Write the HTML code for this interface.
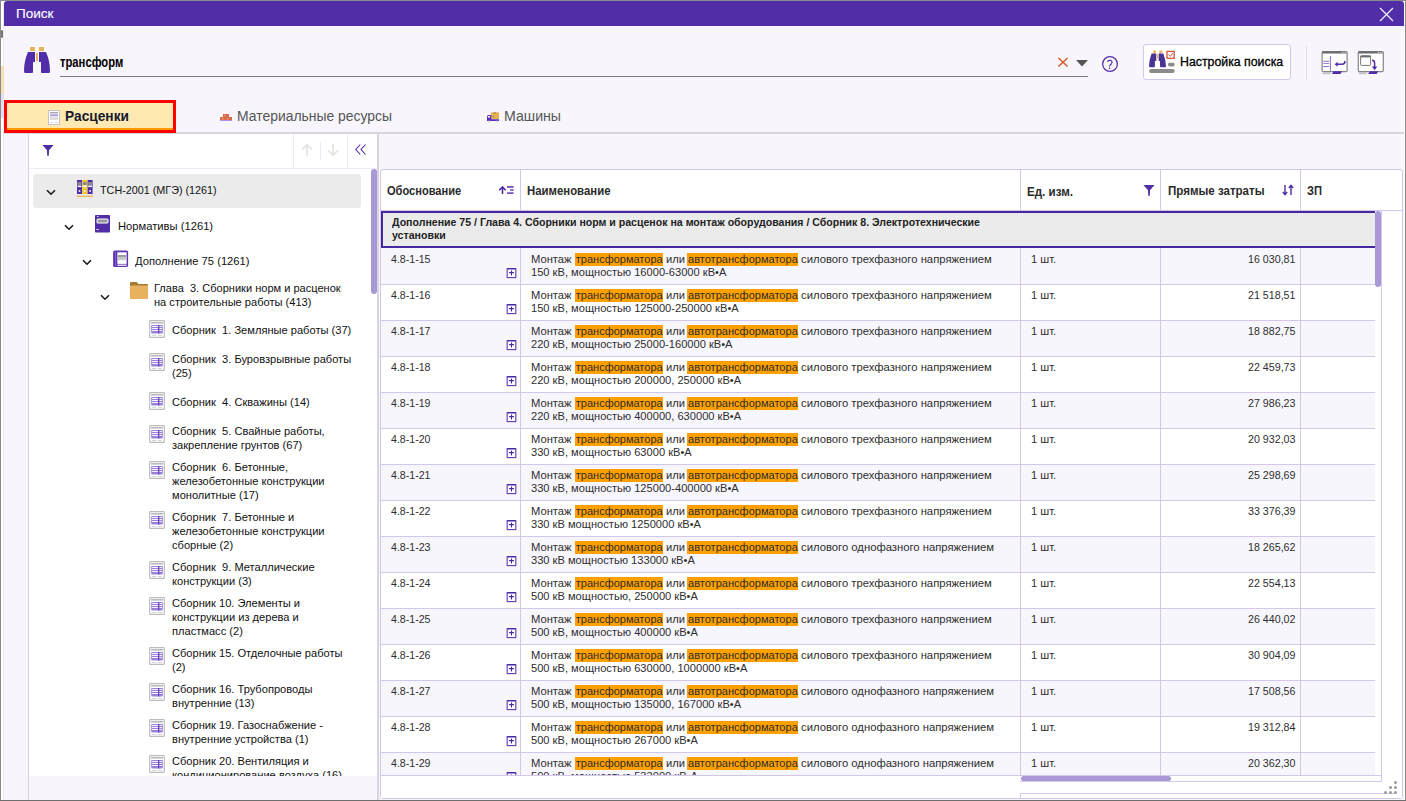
<!DOCTYPE html><html><head><meta charset="utf-8"><style>
html,body{margin:0;padding:0;width:1406px;height:801px;overflow:hidden;background:#fff;}
body{position:relative;font-family:"Liberation Sans", sans-serif;}
div,svg,span.t{position:absolute;}
span.t{white-space:pre;transform-origin:0 0;}
</style></head><body>
<div style="left:0px;top:0px;width:1406px;height:801px;background:#ffffff;"></div>
<div style="left:0px;top:0px;width:1406px;height:1px;background:#8a8a8a;"></div>
<div style="left:0px;top:0px;width:1px;height:801px;background:#8a8a8a;"></div>
<div style="left:1405px;top:0px;width:1px;height:801px;background:#8a8a8a;"></div>
<div style="left:0px;top:800px;width:1406px;height:1px;background:#6e6e6e;"></div>
<div style="left:3px;top:1px;width:1px;height:799px;background:#EBEBEB;"></div>
<div style="left:1px;top:30px;width:2px;height:8px;background:#777;border-radius:1px;"></div>
<div style="left:1px;top:66px;width:3px;height:28px;background:#F3E2B5;"></div>
<div style="left:1px;top:94px;width:3px;height:24px;background:#E3E0F5;"></div>
<div style="left:4px;top:1px;width:1400px;height:799px;background:#F8F5FD;border-radius:3px 3px 0 0;"></div>
<div style="left:4px;top:1px;width:1400px;height:25px;background:#512DA8;border-radius:3px 3px 0 0;"></div>
<span class="t" style="left:16.30px;top:5.50px;font-size:13px;line-height:16px;color:#ffffff;-webkit-text-stroke:0.12px #ffffff;transform:scaleX(1.0380);">Поиск</span>
<svg style="left:1379px;top:7px" width="15" height="15" viewBox="0 0 15 15"><path d="M1 1 L14 14 M14 1 L1 14" stroke="#f4f2fa" stroke-width="1.2" fill="none"/></svg>
<svg style="left:24px;top:47px" width="27" height="27" viewBox="0 0 27 27">
<rect x="6" y="0" width="5" height="4" fill="#E8B45A"/>
<rect x="15" y="0" width="5" height="4" fill="#E8B45A"/>
<rect x="12" y="6" width="2" height="8" fill="#E8B45A"/>
<path d="M4 5 H11 V15 H9 V25 Q9 26 8 26 H1 Q0 26 0 24 Q0 14 4 5 Z" fill="#512DA8"/>
<path d="M22 5 H15 V15 H17 V25 Q17 26 18 26 H25 Q26 26 26 24 Q26 14 22 5 Z" fill="#512DA8"/>
</svg>
<span class="t" style="left:60.10px;top:53.15px;font-size:14px;line-height:18px;color:#000;font-weight:700;transform:scaleX(0.8022);">трансформ</span>
<div style="left:60px;top:76px;width:1028px;height:1px;background:#7d7d7d;"></div>
<svg style="left:1057px;top:57px" width="12" height="11" viewBox="0 0 12 11"><path d="M1.4 1 L10.6 9.4 M10.6 1 L1.4 9.4" stroke="#D9521F" stroke-width="1.3" fill="none"/></svg>
<svg style="left:1076px;top:60px" width="12" height="7" viewBox="0 0 12 7"><path d="M0 0 H12 L6 6.5 Z" fill="#555"/></svg>
<svg style="left:1100px;top:54px" width="20" height="20" viewBox="1100 54 20 20"><circle cx="1110" cy="64" r="7.35" stroke="#512DA8" stroke-width="1.25" fill="none"/><path d="M1107.4 61.9 Q1107.9 60.3 1109.9 60.3 Q1112.1 60.4 1112 62.4 Q1111.9 63.6 1110.8 64.5 Q1109.7 65.4 1109.5 66.5" stroke="#512DA8" stroke-width="1.15" fill="none"/><circle cx="1109.5" cy="68.3" r="0.8" fill="#512DA8"/></svg>
<div style="left:1143px;top:44px;width:146px;height:34px;background:#ffffff;border:1px solid #D5C8EE;border-radius:3px;"></div>
<svg style="left:1147px;top:49px" width="30" height="26" viewBox="1147 49 30 26">
<rect x="1153.1" y="50.5" width="2.8" height="2.6" fill="#E8B45A"/>
<rect x="1159.3" y="50.5" width="2.9" height="2.6" fill="#E8B45A"/>
<rect x="1157" y="54.2" width="1.2" height="4.6" fill="#E8B45A"/>
<path d="M1151.6 53.4 H1156.3 V61 H1154.9 V66.3 Q1154.9 67.3 1153.9 67.3 H1150 Q1149 67.3 1149 66.3 Q1149.3 59 1151.6 53.4 Z" fill="#4B3395"/>
<path d="M1163.3 53.4 H1158.7 V61 H1160 V66.3 Q1160 67.3 1161 67.3 H1165 Q1166 67.3 1166 66.3 Q1165.6 59 1163.3 53.4 Z" fill="#4B3395"/>
<rect x="1167" y="51.4" width="7.2" height="6.9" fill="#fff" stroke="#D9553A" stroke-width="1.3"/>
<path d="M1168.6 54.6 L1170.4 56.3 L1173 53" stroke="#D9553A" stroke-width="1" fill="none"/>
<rect x="1167.9" y="62.8" width="6.8" height="3.6" rx="1.8" fill="#8a8a8a"/>
<rect x="1149.1" y="69" width="25.6" height="4" rx="2" fill="#8a8a8a"/>
</svg>
<span class="t" style="left:1180.30px;top:54.47px;font-size:12.5px;line-height:16px;color:#000;-webkit-text-stroke:0.3px #000;transform:scaleX(0.9859);">Настройка поиска</span>
<div style="left:1306px;top:46px;width:1px;height:34px;background:#E3DEF2;"></div>
<svg style="left:1320px;top:49px" width="30" height="27" viewBox="1320 49 30 27">
<path d="M1322.0 72.5 H1331.0 L1330.0 74.3 H1323.0 Z" fill="#c4c4c4"/>
<rect x="1322.1" y="51.6" width="25" height="20" rx="1.2" fill="#fff" stroke="#858585" stroke-width="1.2"/>
<rect x="1322.1" y="51.2" width="25" height="2.3" rx="1" fill="#6b6b6b"/>
<rect x="1341.5" y="51.8" width="1" height="1" fill="#fff"/><rect x="1343.5" y="51.8" width="1" height="1" fill="#fff"/><rect x="1345.5" y="51.8" width="1" height="1" fill="#fff"/>
<path d="M1332.0 74 L1333.5 71.3 H1342.0 L1340.5 74 Z" fill="#512DA8"/>

<rect x="1323.2" y="60.8" width="6" height="0.9" fill="#7E57C2"/>
<rect x="1323.2" y="63.1" width="6" height="0.9" fill="#9575CD"/>
<rect x="1323.2" y="66.1" width="6" height="0.9" fill="#7E57C2"/>
<rect x="1329.9" y="56" width="1.1" height="14.8" fill="#9575CD"/>
<path d="M1345 61 Q1345 64.3 1342 64.3 H1336.5" stroke="#512DA8" stroke-width="1.5" fill="none"/>
<path d="M1334.6 64.3 L1337.6 61.8 V66.8 Z" fill="#512DA8"/>
</svg>
<svg style="left:1356px;top:49px" width="30" height="27" viewBox="1356 49 30 27">
<path d="M1358.2 72.5 H1367.2 L1366.2 74.3 H1359.2 Z" fill="#c4c4c4"/>
<rect x="1358.3" y="51.6" width="25" height="20" rx="1.2" fill="#fff" stroke="#858585" stroke-width="1.2"/>
<rect x="1358.3" y="51.2" width="25" height="2.3" rx="1" fill="#6b6b6b"/>
<rect x="1377.7" y="51.8" width="1" height="1" fill="#fff"/><rect x="1379.7" y="51.8" width="1" height="1" fill="#fff"/><rect x="1381.7" y="51.8" width="1" height="1" fill="#fff"/>
<path d="M1368.2 74 L1369.7 71.3 H1378.2 L1376.7 74 Z" fill="#512DA8"/>

<rect x="1360.6" y="55.8" width="10" height="9.6" rx="0.8" fill="#fff" stroke="#7a7a7a" stroke-width="1"/>
<rect x="1360.6" y="55.6" width="10" height="1.8" fill="#6b6b6b"/>
<path d="M1372 60.3 Q1374.6 60.3 1374.6 63 V67.5" stroke="#512DA8" stroke-width="1.5" fill="none"/>
<path d="M1371.9 66.5 H1377.3 L1374.6 70.3 Z" fill="#512DA8"/>
</svg>
<div style="left:4px;top:132px;width:1400px;height:2px;background:#D8D5DF;"></div>
<div style="left:4px;top:100px;width:172px;height:33px;background:#FFE9B2;box-sizing:border-box;border:3px solid #FF0000;"></div>
<div style="left:7px;top:128px;width:166px;height:2px;background:#FF9800;"></div>
<svg style="left:48px;top:110px" width="12" height="15" viewBox="0 0 12 15">
<rect x="0.5" y="0.5" width="11" height="14" fill="#fff" stroke="#c4c4c4"/>
<rect x="2" y="2" width="8" height="1.5" fill="#aaa"/>
<rect x="2" y="4.5" width="8" height="1.3" fill="#9C7FD9"/>
<rect x="2" y="6.5" width="8" height="3.5" fill="#ddd"/>
<rect x="2" y="12" width="3" height="0.8" fill="#ccc"/><rect x="7" y="12" width="3" height="0.8" fill="#ccc"/>
</svg>
<span class="t" style="left:65.40px;top:106.95px;font-size:14px;line-height:18px;color:#151A2E;font-weight:700;transform:scaleX(0.9818);">Расценки</span>
<svg style="left:220px;top:113px" width="12" height="9" viewBox="0 0 12 9">
<rect x="3" y="1" width="6" height="3" fill="#DB6A4C"/>
<rect x="0" y="4" width="12" height="3.2" fill="#DB6A4C"/>
<rect x="4.5" y="1.8" width="0.8" height="1.5" fill="#F4C0B0"/>
<rect x="2.5" y="5" width="0.8" height="1.5" fill="#F4C0B0"/><rect x="7" y="5" width="0.8" height="1.5" fill="#F4C0B0"/>
<rect x="0" y="7.1" width="12" height="0.9" fill="#A98BE6"/>
</svg>
<span class="t" style="left:237.00px;top:107.45px;font-size:14px;line-height:18px;color:#555;transform:scaleX(0.9940);">Материальные ресурсы</span>
<svg style="left:486px;top:111px" width="15" height="13" viewBox="486 111 15 13">
<rect x="491" y="112.3" width="8" height="6.8" rx="0.4" fill="#E9B052"/>
<rect x="494" y="112.3" width="1.6" height="1.6" fill="#9a8a70"/>
<circle cx="493.4" cy="116.4" r="0.7" fill="#8a7a66"/>
<path d="M487 120.9 V116.6 Q487 115 488.6 115 H491.3 V119.2 H499 V120.9 Z" fill="#5B2FC0"/>
<rect x="487.9" y="116" width="2.2" height="1.6" fill="#fff"/>
<circle cx="489" cy="121.5" r="0.9" fill="#d8d8d0"/><circle cx="497" cy="121.5" r="0.9" fill="#d8d8d0"/>
</svg>
<span class="t" style="left:503.80px;top:107.45px;font-size:14px;line-height:18px;color:#555;transform:scaleX(1.0097);">Машины</span>
<div style="left:28px;top:134px;width:1px;height:666px;background:#D9CDF0;"></div>
<div style="left:29px;top:134px;width:348px;height:642px;background:#ffffff;"></div>
<div style="left:377px;top:134px;width:2px;height:666px;background:#D8D5DF;"></div>
<div style="left:29px;top:168px;width:348px;height:1px;background:#EEE9F7;"></div>
<div style="left:293px;top:134px;width:1px;height:34px;background:#EEE9F7;"></div>
<div style="left:347px;top:134px;width:1px;height:34px;background:#EEE9F7;"></div>
<div style="left:320px;top:142px;width:1px;height:18px;background:#EEE9F7;"></div>
<svg style="left:42px;top:145px" width="12" height="11" viewBox="0 0 12 11"><path d="M0.4 0 H11.6 L7 5.3 L6.8 10.8 H5.2 L5 5.3 Z" fill="#512DA8"/></svg>
<svg style="left:301px;top:143px" width="12" height="14" viewBox="0 0 12 14"><path d="M6 13 V1.8 M1.2 6.5 L6 1.8 L10.8 6.5" stroke="#E3E3E3" stroke-width="1.7" fill="none"/></svg>
<svg style="left:327px;top:143px" width="12" height="14" viewBox="0 0 12 14"><path d="M6 1 V12.2 M1.2 7.5 L6 12.2 L10.8 7.5" stroke="#E3E3E3" stroke-width="1.7" fill="none"/></svg>
<svg style="left:354px;top:143px" width="14" height="14" viewBox="0 0 14 14"><path d="M6.3 1.5 L1.8 6.5 L6.3 11.5 M11.5 1.5 L7 6.5 L11.5 11.5" stroke="#512DA8" stroke-width="1.1" fill="none"/></svg>
<div style="left:371px;top:169px;width:6px;height:125px;background:#A898D5;border-radius:3px;"></div>
<div style="left:33px;top:174px;width:328px;height:34px;background:#EBEBEB;border-radius:3px;"></div>
<svg style="left:46px;top:188.5px" width="10" height="7" viewBox="0 0 10 7"><path d="M1 1.2 L5 5.2 L9 1.2" stroke="#1a1a1a" stroke-width="1.6" fill="none"/></svg>
<svg style="left:64px;top:223.5px" width="10" height="7" viewBox="0 0 10 7"><path d="M1 1.2 L5 5.2 L9 1.2" stroke="#1a1a1a" stroke-width="1.6" fill="none"/></svg>
<svg style="left:82px;top:258.5px" width="10" height="7" viewBox="0 0 10 7"><path d="M1 1.2 L5 5.2 L9 1.2" stroke="#1a1a1a" stroke-width="1.6" fill="none"/></svg>
<svg style="left:100px;top:293.5px" width="10" height="7" viewBox="0 0 10 7"><path d="M1 1.2 L5 5.2 L9 1.2" stroke="#1a1a1a" stroke-width="1.6" fill="none"/></svg>
<svg style="left:76px;top:179px" width="18" height="19" viewBox="0 0 18 19">
<rect x="1" y="1" width="5" height="14" fill="#512DA8"/>
<rect x="6.3" y="1" width="5" height="14" fill="#F2C425"/>
<rect x="11.6" y="1" width="5" height="14" fill="#512DA8"/>
<rect x="1.6" y="3" width="3.8" height="3" fill="#8a8a8a"/><rect x="6.9" y="3" width="3.8" height="3" fill="#8a8a8a"/><rect x="12.2" y="3" width="3.8" height="3" fill="#8a8a8a"/>
<rect x="1.6" y="6.5" width="3.8" height="1.6" fill="#fff"/><rect x="6.9" y="6.5" width="3.8" height="1.6" fill="#fff"/><rect x="12.2" y="6.5" width="3.8" height="1.6" fill="#fff"/>
<circle cx="3.5" cy="12" r="0.9" fill="#fff"/><circle cx="8.8" cy="12" r="0.9" fill="#fff"/><circle cx="14.1" cy="12" r="0.9" fill="#fff"/>
<rect x="0.5" y="16.5" width="16.5" height="1.6" fill="#EDB868"/>
</svg>
<span class="t" style="left:99.60px;top:183.42px;font-size:11.5px;line-height:14px;color:#111;transform:scaleX(0.9379);">ТСН-2001 (МГЭ) (1261)</span>
<svg style="left:94px;top:214px" width="17" height="19" viewBox="0 0 17 19">
<rect x="1" y="1" width="15" height="17.5" rx="0.8" fill="#512DA8"/>
<rect x="2.5" y="4.5" width="12" height="5" rx="1.5" fill="#fff"/>
<rect x="3.5" y="5.5" width="10" height="3" fill="#999"/>
<rect x="3" y="2" width="1.5" height="1" fill="#ddd"/>
<rect x="2.5" y="15" width="2" height="1" fill="#fff"/>
</svg>
<span class="t" style="left:117.60px;top:218.62px;font-size:11.5px;line-height:14px;color:#111;transform:scaleX(0.9738);">Нормативы (1261)</span>
<svg style="left:112px;top:250px" width="17" height="18" viewBox="112 250 17 18">
<rect x="113.1" y="250.6" width="15" height="16.4" rx="1.6" fill="#5E35B1"/>
<rect x="115" y="251.5" width="0.7" height="14.5" fill="#8E6FD0"/>
<rect x="117.4" y="252.3" width="9.2" height="11.6" fill="#fff"/>
<rect x="118" y="255" width="8" height="2.6" fill="#9a9a9a"/>
<rect x="118" y="257.6" width="8" height="2.6" fill="#c8c8c8"/>
<rect x="117.4" y="264.6" width="9.2" height="1.2" fill="#fff"/>
</svg>
<span class="t" style="left:135.00px;top:254.22px;font-size:11.5px;line-height:14px;color:#111;transform:scaleX(0.9724);">Дополнение 75 (1261)</span>
<svg style="left:129px;top:281px" width="20" height="19" viewBox="0 0 20 19">
<path d="M1 2 Q1 1 2 1 H7.5 L9.5 3 H18 Q19 3 19 4 V5 H1 Z" fill="#A47A2F"/>
<rect x="1" y="4.5" width="18" height="13.5" rx="0.8" fill="#E8B15E"/>
</svg>
<span class="t" style="left:153.50px;top:281.32px;font-size:11.5px;line-height:14px;color:#111;transform:scaleX(0.9604);">Глава  3. Сборники норм и расценок</span>
<span class="t" style="left:153.50px;top:294.82px;font-size:11.5px;line-height:14px;color:#111;transform:scaleX(0.9642);">на строительные работы (413)</span>
<svg style="left:149px;top:320px" width="16" height="18" viewBox="0 0 16 18">
<rect x="0.7" y="0.7" width="14.6" height="16.6" rx="0.6" fill="#fff" stroke="#BDBDBD" stroke-width="1.2"/>
<rect x="2" y="2" width="12" height="1.6" fill="#bbb"/>
<rect x="2.2" y="5" width="11.6" height="8.5" rx="1" fill="#9A82DC"/>
<rect x="3" y="6" width="6.2" height="0.9" fill="#fff"/><rect x="10.3" y="6" width="2.6" height="0.9" fill="#fff"/>
<rect x="3" y="8" width="6.2" height="0.9" fill="#fff"/><rect x="10.3" y="8" width="2.6" height="0.9" fill="#fff"/>
<rect x="3" y="10" width="6.2" height="0.9" fill="#fff"/><rect x="10.3" y="10" width="2.6" height="0.9" fill="#fff"/>
<rect x="9.2" y="5" width="1" height="8.5" fill="#5E35B1"/>
<rect x="2.8" y="15" width="4.5" height="0.8" fill="#ccc"/><rect x="9" y="15" width="4" height="0.8" fill="#ccc"/>
</svg>
<span class="t" style="left:171.60px;top:323.22px;font-size:11.5px;line-height:14px;color:#111;transform:scaleX(0.9650);">Сборник  1. Земляные работы (37)</span>
<svg style="left:149px;top:352.5px" width="16" height="18" viewBox="0 0 16 18">
<rect x="0.7" y="0.7" width="14.6" height="16.6" rx="0.6" fill="#fff" stroke="#BDBDBD" stroke-width="1.2"/>
<rect x="2" y="2" width="12" height="1.6" fill="#bbb"/>
<rect x="2.2" y="5" width="11.6" height="8.5" rx="1" fill="#9A82DC"/>
<rect x="3" y="6" width="6.2" height="0.9" fill="#fff"/><rect x="10.3" y="6" width="2.6" height="0.9" fill="#fff"/>
<rect x="3" y="8" width="6.2" height="0.9" fill="#fff"/><rect x="10.3" y="8" width="2.6" height="0.9" fill="#fff"/>
<rect x="3" y="10" width="6.2" height="0.9" fill="#fff"/><rect x="10.3" y="10" width="2.6" height="0.9" fill="#fff"/>
<rect x="9.2" y="5" width="1" height="8.5" fill="#5E35B1"/>
<rect x="2.8" y="15" width="4.5" height="0.8" fill="#ccc"/><rect x="9" y="15" width="4" height="0.8" fill="#ccc"/>
</svg>
<span class="t" style="left:171.60px;top:352.32px;font-size:11.5px;line-height:14px;color:#111;transform:scaleX(0.9650);">Сборник  3. Буровзрывные работы</span>
<span class="t" style="left:171.60px;top:366.32px;font-size:11.5px;line-height:14px;color:#111;transform:scaleX(0.9650);">(25)</span>
<svg style="left:149px;top:392px" width="16" height="18" viewBox="0 0 16 18">
<rect x="0.7" y="0.7" width="14.6" height="16.6" rx="0.6" fill="#fff" stroke="#BDBDBD" stroke-width="1.2"/>
<rect x="2" y="2" width="12" height="1.6" fill="#bbb"/>
<rect x="2.2" y="5" width="11.6" height="8.5" rx="1" fill="#9A82DC"/>
<rect x="3" y="6" width="6.2" height="0.9" fill="#fff"/><rect x="10.3" y="6" width="2.6" height="0.9" fill="#fff"/>
<rect x="3" y="8" width="6.2" height="0.9" fill="#fff"/><rect x="10.3" y="8" width="2.6" height="0.9" fill="#fff"/>
<rect x="3" y="10" width="6.2" height="0.9" fill="#fff"/><rect x="10.3" y="10" width="2.6" height="0.9" fill="#fff"/>
<rect x="9.2" y="5" width="1" height="8.5" fill="#5E35B1"/>
<rect x="2.8" y="15" width="4.5" height="0.8" fill="#ccc"/><rect x="9" y="15" width="4" height="0.8" fill="#ccc"/>
</svg>
<span class="t" style="left:171.60px;top:395.22px;font-size:11.5px;line-height:14px;color:#111;transform:scaleX(0.9650);">Сборник  4. Скважины (14)</span>
<svg style="left:149px;top:424.5px" width="16" height="18" viewBox="0 0 16 18">
<rect x="0.7" y="0.7" width="14.6" height="16.6" rx="0.6" fill="#fff" stroke="#BDBDBD" stroke-width="1.2"/>
<rect x="2" y="2" width="12" height="1.6" fill="#bbb"/>
<rect x="2.2" y="5" width="11.6" height="8.5" rx="1" fill="#9A82DC"/>
<rect x="3" y="6" width="6.2" height="0.9" fill="#fff"/><rect x="10.3" y="6" width="2.6" height="0.9" fill="#fff"/>
<rect x="3" y="8" width="6.2" height="0.9" fill="#fff"/><rect x="10.3" y="8" width="2.6" height="0.9" fill="#fff"/>
<rect x="3" y="10" width="6.2" height="0.9" fill="#fff"/><rect x="10.3" y="10" width="2.6" height="0.9" fill="#fff"/>
<rect x="9.2" y="5" width="1" height="8.5" fill="#5E35B1"/>
<rect x="2.8" y="15" width="4.5" height="0.8" fill="#ccc"/><rect x="9" y="15" width="4" height="0.8" fill="#ccc"/>
</svg>
<span class="t" style="left:171.60px;top:424.32px;font-size:11.5px;line-height:14px;color:#111;transform:scaleX(0.9650);">Сборник  5. Свайные работы,</span>
<span class="t" style="left:171.60px;top:438.32px;font-size:11.5px;line-height:14px;color:#111;transform:scaleX(0.9650);">закрепление грунтов (67)</span>
<svg style="left:149px;top:460.5px" width="16" height="18" viewBox="0 0 16 18">
<rect x="0.7" y="0.7" width="14.6" height="16.6" rx="0.6" fill="#fff" stroke="#BDBDBD" stroke-width="1.2"/>
<rect x="2" y="2" width="12" height="1.6" fill="#bbb"/>
<rect x="2.2" y="5" width="11.6" height="8.5" rx="1" fill="#9A82DC"/>
<rect x="3" y="6" width="6.2" height="0.9" fill="#fff"/><rect x="10.3" y="6" width="2.6" height="0.9" fill="#fff"/>
<rect x="3" y="8" width="6.2" height="0.9" fill="#fff"/><rect x="10.3" y="8" width="2.6" height="0.9" fill="#fff"/>
<rect x="3" y="10" width="6.2" height="0.9" fill="#fff"/><rect x="10.3" y="10" width="2.6" height="0.9" fill="#fff"/>
<rect x="9.2" y="5" width="1" height="8.5" fill="#5E35B1"/>
<rect x="2.8" y="15" width="4.5" height="0.8" fill="#ccc"/><rect x="9" y="15" width="4" height="0.8" fill="#ccc"/>
</svg>
<span class="t" style="left:171.60px;top:460.32px;font-size:11.5px;line-height:14px;color:#111;transform:scaleX(0.9650);">Сборник  6. Бетонные,</span>
<span class="t" style="left:171.60px;top:474.32px;font-size:11.5px;line-height:14px;color:#111;transform:scaleX(0.9650);">железобетонные конструкции</span>
<span class="t" style="left:171.60px;top:488.32px;font-size:11.5px;line-height:14px;color:#111;transform:scaleX(0.9650);">монолитные (17)</span>
<svg style="left:149px;top:510.5px" width="16" height="18" viewBox="0 0 16 18">
<rect x="0.7" y="0.7" width="14.6" height="16.6" rx="0.6" fill="#fff" stroke="#BDBDBD" stroke-width="1.2"/>
<rect x="2" y="2" width="12" height="1.6" fill="#bbb"/>
<rect x="2.2" y="5" width="11.6" height="8.5" rx="1" fill="#9A82DC"/>
<rect x="3" y="6" width="6.2" height="0.9" fill="#fff"/><rect x="10.3" y="6" width="2.6" height="0.9" fill="#fff"/>
<rect x="3" y="8" width="6.2" height="0.9" fill="#fff"/><rect x="10.3" y="8" width="2.6" height="0.9" fill="#fff"/>
<rect x="3" y="10" width="6.2" height="0.9" fill="#fff"/><rect x="10.3" y="10" width="2.6" height="0.9" fill="#fff"/>
<rect x="9.2" y="5" width="1" height="8.5" fill="#5E35B1"/>
<rect x="2.8" y="15" width="4.5" height="0.8" fill="#ccc"/><rect x="9" y="15" width="4" height="0.8" fill="#ccc"/>
</svg>
<span class="t" style="left:171.60px;top:510.32px;font-size:11.5px;line-height:14px;color:#111;transform:scaleX(0.9650);">Сборник  7. Бетонные и</span>
<span class="t" style="left:171.60px;top:524.32px;font-size:11.5px;line-height:14px;color:#111;transform:scaleX(0.9650);">железобетонные конструкции</span>
<span class="t" style="left:171.60px;top:538.32px;font-size:11.5px;line-height:14px;color:#111;transform:scaleX(0.9650);">сборные (2)</span>
<svg style="left:149px;top:560.5px" width="16" height="18" viewBox="0 0 16 18">
<rect x="0.7" y="0.7" width="14.6" height="16.6" rx="0.6" fill="#fff" stroke="#BDBDBD" stroke-width="1.2"/>
<rect x="2" y="2" width="12" height="1.6" fill="#bbb"/>
<rect x="2.2" y="5" width="11.6" height="8.5" rx="1" fill="#9A82DC"/>
<rect x="3" y="6" width="6.2" height="0.9" fill="#fff"/><rect x="10.3" y="6" width="2.6" height="0.9" fill="#fff"/>
<rect x="3" y="8" width="6.2" height="0.9" fill="#fff"/><rect x="10.3" y="8" width="2.6" height="0.9" fill="#fff"/>
<rect x="3" y="10" width="6.2" height="0.9" fill="#fff"/><rect x="10.3" y="10" width="2.6" height="0.9" fill="#fff"/>
<rect x="9.2" y="5" width="1" height="8.5" fill="#5E35B1"/>
<rect x="2.8" y="15" width="4.5" height="0.8" fill="#ccc"/><rect x="9" y="15" width="4" height="0.8" fill="#ccc"/>
</svg>
<span class="t" style="left:171.60px;top:560.32px;font-size:11.5px;line-height:14px;color:#111;transform:scaleX(0.9650);">Сборник  9. Металлические</span>
<span class="t" style="left:171.60px;top:574.32px;font-size:11.5px;line-height:14px;color:#111;transform:scaleX(0.9650);">конструкции (3)</span>
<svg style="left:149px;top:596.5px" width="16" height="18" viewBox="0 0 16 18">
<rect x="0.7" y="0.7" width="14.6" height="16.6" rx="0.6" fill="#fff" stroke="#BDBDBD" stroke-width="1.2"/>
<rect x="2" y="2" width="12" height="1.6" fill="#bbb"/>
<rect x="2.2" y="5" width="11.6" height="8.5" rx="1" fill="#9A82DC"/>
<rect x="3" y="6" width="6.2" height="0.9" fill="#fff"/><rect x="10.3" y="6" width="2.6" height="0.9" fill="#fff"/>
<rect x="3" y="8" width="6.2" height="0.9" fill="#fff"/><rect x="10.3" y="8" width="2.6" height="0.9" fill="#fff"/>
<rect x="3" y="10" width="6.2" height="0.9" fill="#fff"/><rect x="10.3" y="10" width="2.6" height="0.9" fill="#fff"/>
<rect x="9.2" y="5" width="1" height="8.5" fill="#5E35B1"/>
<rect x="2.8" y="15" width="4.5" height="0.8" fill="#ccc"/><rect x="9" y="15" width="4" height="0.8" fill="#ccc"/>
</svg>
<span class="t" style="left:171.60px;top:596.32px;font-size:11.5px;line-height:14px;color:#111;transform:scaleX(0.9650);">Сборник 10. Элементы и</span>
<span class="t" style="left:171.60px;top:610.32px;font-size:11.5px;line-height:14px;color:#111;transform:scaleX(0.9650);">конструкции из дерева и</span>
<span class="t" style="left:171.60px;top:624.32px;font-size:11.5px;line-height:14px;color:#111;transform:scaleX(0.9650);">пластмасс (2)</span>
<svg style="left:149px;top:646.5px" width="16" height="18" viewBox="0 0 16 18">
<rect x="0.7" y="0.7" width="14.6" height="16.6" rx="0.6" fill="#fff" stroke="#BDBDBD" stroke-width="1.2"/>
<rect x="2" y="2" width="12" height="1.6" fill="#bbb"/>
<rect x="2.2" y="5" width="11.6" height="8.5" rx="1" fill="#9A82DC"/>
<rect x="3" y="6" width="6.2" height="0.9" fill="#fff"/><rect x="10.3" y="6" width="2.6" height="0.9" fill="#fff"/>
<rect x="3" y="8" width="6.2" height="0.9" fill="#fff"/><rect x="10.3" y="8" width="2.6" height="0.9" fill="#fff"/>
<rect x="3" y="10" width="6.2" height="0.9" fill="#fff"/><rect x="10.3" y="10" width="2.6" height="0.9" fill="#fff"/>
<rect x="9.2" y="5" width="1" height="8.5" fill="#5E35B1"/>
<rect x="2.8" y="15" width="4.5" height="0.8" fill="#ccc"/><rect x="9" y="15" width="4" height="0.8" fill="#ccc"/>
</svg>
<span class="t" style="left:171.60px;top:646.32px;font-size:11.5px;line-height:14px;color:#111;transform:scaleX(0.9650);">Сборник 15. Отделочные работы</span>
<span class="t" style="left:171.60px;top:660.32px;font-size:11.5px;line-height:14px;color:#111;transform:scaleX(0.9650);">(2)</span>
<svg style="left:149px;top:682.5px" width="16" height="18" viewBox="0 0 16 18">
<rect x="0.7" y="0.7" width="14.6" height="16.6" rx="0.6" fill="#fff" stroke="#BDBDBD" stroke-width="1.2"/>
<rect x="2" y="2" width="12" height="1.6" fill="#bbb"/>
<rect x="2.2" y="5" width="11.6" height="8.5" rx="1" fill="#9A82DC"/>
<rect x="3" y="6" width="6.2" height="0.9" fill="#fff"/><rect x="10.3" y="6" width="2.6" height="0.9" fill="#fff"/>
<rect x="3" y="8" width="6.2" height="0.9" fill="#fff"/><rect x="10.3" y="8" width="2.6" height="0.9" fill="#fff"/>
<rect x="3" y="10" width="6.2" height="0.9" fill="#fff"/><rect x="10.3" y="10" width="2.6" height="0.9" fill="#fff"/>
<rect x="9.2" y="5" width="1" height="8.5" fill="#5E35B1"/>
<rect x="2.8" y="15" width="4.5" height="0.8" fill="#ccc"/><rect x="9" y="15" width="4" height="0.8" fill="#ccc"/>
</svg>
<span class="t" style="left:171.60px;top:682.32px;font-size:11.5px;line-height:14px;color:#111;transform:scaleX(0.9650);">Сборник 16. Трубопроводы</span>
<span class="t" style="left:171.60px;top:696.32px;font-size:11.5px;line-height:14px;color:#111;transform:scaleX(0.9650);">внутренние (13)</span>
<svg style="left:149px;top:718.5px" width="16" height="18" viewBox="0 0 16 18">
<rect x="0.7" y="0.7" width="14.6" height="16.6" rx="0.6" fill="#fff" stroke="#BDBDBD" stroke-width="1.2"/>
<rect x="2" y="2" width="12" height="1.6" fill="#bbb"/>
<rect x="2.2" y="5" width="11.6" height="8.5" rx="1" fill="#9A82DC"/>
<rect x="3" y="6" width="6.2" height="0.9" fill="#fff"/><rect x="10.3" y="6" width="2.6" height="0.9" fill="#fff"/>
<rect x="3" y="8" width="6.2" height="0.9" fill="#fff"/><rect x="10.3" y="8" width="2.6" height="0.9" fill="#fff"/>
<rect x="3" y="10" width="6.2" height="0.9" fill="#fff"/><rect x="10.3" y="10" width="2.6" height="0.9" fill="#fff"/>
<rect x="9.2" y="5" width="1" height="8.5" fill="#5E35B1"/>
<rect x="2.8" y="15" width="4.5" height="0.8" fill="#ccc"/><rect x="9" y="15" width="4" height="0.8" fill="#ccc"/>
</svg>
<span class="t" style="left:171.60px;top:718.32px;font-size:11.5px;line-height:14px;color:#111;transform:scaleX(0.9650);">Сборник 19. Газоснабжение -</span>
<span class="t" style="left:171.60px;top:732.32px;font-size:11.5px;line-height:14px;color:#111;transform:scaleX(0.9650);">внутренние устройства (1)</span>
<svg style="left:149px;top:754.5px" width="16" height="18" viewBox="0 0 16 18">
<rect x="0.7" y="0.7" width="14.6" height="16.6" rx="0.6" fill="#fff" stroke="#BDBDBD" stroke-width="1.2"/>
<rect x="2" y="2" width="12" height="1.6" fill="#bbb"/>
<rect x="2.2" y="5" width="11.6" height="8.5" rx="1" fill="#9A82DC"/>
<rect x="3" y="6" width="6.2" height="0.9" fill="#fff"/><rect x="10.3" y="6" width="2.6" height="0.9" fill="#fff"/>
<rect x="3" y="8" width="6.2" height="0.9" fill="#fff"/><rect x="10.3" y="8" width="2.6" height="0.9" fill="#fff"/>
<rect x="3" y="10" width="6.2" height="0.9" fill="#fff"/><rect x="10.3" y="10" width="2.6" height="0.9" fill="#fff"/>
<rect x="9.2" y="5" width="1" height="8.5" fill="#5E35B1"/>
<rect x="2.8" y="15" width="4.5" height="0.8" fill="#ccc"/><rect x="9" y="15" width="4" height="0.8" fill="#ccc"/>
</svg>
<span class="t" style="left:171.60px;top:754.32px;font-size:11.5px;line-height:14px;color:#111;transform:scaleX(0.9650);">Сборник 20. Вентиляция и</span>
<span class="t" style="left:171.60px;top:768.32px;font-size:11.5px;line-height:14px;color:#111;transform:scaleX(0.9650);">кондиционирование воздуха (16)</span>
<div style="left:29px;top:776px;width:348px;height:24px;background:#F8F5FD;"></div>
<div style="left:380px;top:169px;width:1023px;height:630px;background:#ffffff;box-sizing:border-box;border:1px solid #D4C7EC;border-radius:3px;"></div>
<div style="left:381px;top:210px;width:1021px;height:1px;background:#D4C7EC;"></div>
<div style="left:520px;top:170px;width:1px;height:40px;background:#D4C7EC;"></div>
<div style="left:1020px;top:170px;width:1px;height:40px;background:#D4C7EC;"></div>
<div style="left:1160px;top:170px;width:1px;height:40px;background:#D4C7EC;"></div>
<div style="left:1300px;top:170px;width:1px;height:40px;background:#D4C7EC;"></div>
<span class="t" style="left:387.20px;top:184.34px;font-size:12px;line-height:15px;color:#2b2b2b;font-weight:700;transform:scaleX(0.9232);">Обоснование</span>
<span class="t" style="left:527.00px;top:183.84px;font-size:12px;line-height:15px;color:#2b2b2b;font-weight:700;transform:scaleX(0.9484);">Наименование</span>
<span class="t" style="left:1027.40px;top:185.34px;font-size:12px;line-height:15px;color:#2b2b2b;font-weight:700;transform:scaleX(0.9675);">Ед. изм.</span>
<span class="t" style="left:1167.50px;top:183.84px;font-size:12px;line-height:15px;color:#2b2b2b;font-weight:700;transform:scaleX(0.9609);">Прямые затраты</span>
<span class="t" style="left:1307.00px;top:183.84px;font-size:12px;line-height:15px;color:#2b2b2b;font-weight:700;transform:scaleX(0.9284);">ЗП</span>
<svg style="left:497px;top:184px" width="18" height="12" viewBox="497 184 18 12">
<path d="M502.5 193.9 V187.2 M499.3 190.2 L502.5 186.9 L505.7 190.2" stroke="#512DA8" stroke-width="1.6" fill="none"/>
<rect x="507" y="186.1" width="6.6" height="1.7" fill="#6A45BE"/>
<rect x="510.2" y="189.2" width="3.4" height="1.6" fill="#6A45BE"/>
<rect x="507" y="192.3" width="6.6" height="1.6" fill="#6A45BE"/>
</svg>
<svg style="left:1143px;top:185px" width="12" height="11" viewBox="0 0 12 11"><path d="M0.4 0 H11.6 L7 5.3 L6.8 10.8 H5.2 L5 5.3 Z" fill="#512DA8"/></svg>
<svg style="left:1282px;top:184px" width="12" height="12" viewBox="0 0 12 12">
<path d="M3 1 V10 M0.8 8 L3 10.6 L5.2 8" stroke="#512DA8" stroke-width="1.4" fill="none"/>
<path d="M9 11 V2 M6.8 4 L9 1.4 L11.2 4" stroke="#512DA8" stroke-width="1.4" fill="none"/>
</svg>
<div style="left:381px;top:211px;width:994px;height:37px;background:#EBEBEB;box-sizing:border-box;border-top:2px solid #4527A0;border-bottom:2px solid #4527A0;border-left:2px solid #4527A0;"></div>
<span class="t" style="left:392.00px;top:214.89px;font-size:11px;line-height:14px;color:#222;font-weight:700;transform:scaleX(0.9608);">Дополнение 75 / Глава 4. Сборники норм и расценок на монтаж оборудования / Сборник 8. Электротехнические</span>
<span class="t" style="left:392.00px;top:227.69px;font-size:11px;line-height:14px;color:#222;font-weight:700;transform:scaleX(0.9610);">установки</span>
<div style="left:381px;top:248px;width:994px;height:36px;background:#F8F6FD;"></div>
<div style="left:381px;top:284px;width:994px;height:1px;background:#D4C7EC;"></div>
<div style="left:520px;top:248px;width:1px;height:36px;background:#D4C7EC;"></div>
<div style="left:1020px;top:248px;width:1px;height:36px;background:#D4C7EC;"></div>
<div style="left:1160px;top:248px;width:1px;height:36px;background:#D4C7EC;"></div>
<div style="left:1300px;top:248px;width:1px;height:36px;background:#D4C7EC;"></div>
<span class="t" style="left:391.10px;top:252.19px;font-size:11px;line-height:14px;color:#2e2e2e;transform:scaleX(0.9638);">4.8-1-15</span>
<svg style="left:506px;top:268px" width="11" height="11" viewBox="0 0 11 11"><rect x="1.2" y="0.7" width="8.6" height="8.9" fill="#fff" stroke="#6A45BE" stroke-width="1.2"/><rect x="1.2" y="0.1" width="8.6" height="1.2" fill="#4527A0"/><path d="M5.5 2.6 V7.4 M3.1 4.6 H7.9" stroke="#4527A0" stroke-width="1.1"/></svg>
<div style="left:575px;top:253px;width:88px;height:13px;background:#FFA000;"></div>
<div style="left:687px;top:253px;width:111px;height:13px;background:#FFA000;"></div>
<span class="t" style="left:530.70px;top:252.19px;font-size:11px;line-height:14px;color:#2e2e2e;transform:scaleX(1.0170);">Монтаж </span>
<span class="t" style="left:575.80px;top:252.19px;font-size:11px;line-height:14px;color:#2e2e2e;">трансформатора</span>
<span class="t" style="left:665.80px;top:252.19px;font-size:11px;line-height:14px;color:#2e2e2e;transform:scaleX(1.0170);">или</span>
<span class="t" style="left:687.80px;top:252.19px;font-size:11px;line-height:14px;color:#2e2e2e;transform:scaleX(1.0040);">автотрансформатора</span>
<span class="t" style="left:801.00px;top:252.19px;font-size:11px;line-height:14px;color:#2e2e2e;transform:scaleX(1.0250);">силового трехфазного напряжением</span>
<span class="t" style="left:530.70px;top:265.19px;font-size:11px;line-height:14px;color:#2e2e2e;transform:scaleX(1.0100);">150 кВ, мощностью 16000-63000 кВ•А</span>
<span class="t" style="left:1031.30px;top:252.19px;font-size:11px;line-height:14px;color:#2e2e2e;transform:scaleX(1.0131);">1 шт.</span>
<span class="t" style="left:1247.53px;top:252.19px;font-size:11px;line-height:14px;color:#2e2e2e;transform:scaleX(0.9700);">16 030,81</span>
<div style="left:381px;top:320px;width:994px;height:1px;background:#D4C7EC;"></div>
<div style="left:520px;top:284px;width:1px;height:36px;background:#D4C7EC;"></div>
<div style="left:1020px;top:284px;width:1px;height:36px;background:#D4C7EC;"></div>
<div style="left:1160px;top:284px;width:1px;height:36px;background:#D4C7EC;"></div>
<div style="left:1300px;top:284px;width:1px;height:36px;background:#D4C7EC;"></div>
<span class="t" style="left:391.10px;top:288.19px;font-size:11px;line-height:14px;color:#2e2e2e;transform:scaleX(0.9638);">4.8-1-16</span>
<svg style="left:506px;top:304px" width="11" height="11" viewBox="0 0 11 11"><rect x="1.2" y="0.7" width="8.6" height="8.9" fill="#fff" stroke="#6A45BE" stroke-width="1.2"/><rect x="1.2" y="0.1" width="8.6" height="1.2" fill="#4527A0"/><path d="M5.5 2.6 V7.4 M3.1 4.6 H7.9" stroke="#4527A0" stroke-width="1.1"/></svg>
<div style="left:575px;top:289px;width:88px;height:13px;background:#FFA000;"></div>
<div style="left:687px;top:289px;width:111px;height:13px;background:#FFA000;"></div>
<span class="t" style="left:530.70px;top:288.19px;font-size:11px;line-height:14px;color:#2e2e2e;transform:scaleX(1.0170);">Монтаж </span>
<span class="t" style="left:575.80px;top:288.19px;font-size:11px;line-height:14px;color:#2e2e2e;">трансформатора</span>
<span class="t" style="left:665.80px;top:288.19px;font-size:11px;line-height:14px;color:#2e2e2e;transform:scaleX(1.0170);">или</span>
<span class="t" style="left:687.80px;top:288.19px;font-size:11px;line-height:14px;color:#2e2e2e;transform:scaleX(1.0040);">автотрансформатора</span>
<span class="t" style="left:801.00px;top:288.19px;font-size:11px;line-height:14px;color:#2e2e2e;transform:scaleX(1.0250);">силового трехфазного напряжением</span>
<span class="t" style="left:530.70px;top:301.19px;font-size:11px;line-height:14px;color:#2e2e2e;transform:scaleX(1.0100);">150 кВ, мощностью 125000-250000 кВ•А</span>
<span class="t" style="left:1031.30px;top:288.19px;font-size:11px;line-height:14px;color:#2e2e2e;transform:scaleX(1.0131);">1 шт.</span>
<span class="t" style="left:1247.53px;top:288.19px;font-size:11px;line-height:14px;color:#2e2e2e;transform:scaleX(0.9700);">21 518,51</span>
<div style="left:381px;top:321px;width:994px;height:35px;background:#F8F6FD;"></div>
<div style="left:381px;top:356px;width:994px;height:1px;background:#D4C7EC;"></div>
<div style="left:520px;top:320px;width:1px;height:36px;background:#D4C7EC;"></div>
<div style="left:1020px;top:320px;width:1px;height:36px;background:#D4C7EC;"></div>
<div style="left:1160px;top:320px;width:1px;height:36px;background:#D4C7EC;"></div>
<div style="left:1300px;top:320px;width:1px;height:36px;background:#D4C7EC;"></div>
<span class="t" style="left:391.10px;top:324.19px;font-size:11px;line-height:14px;color:#2e2e2e;transform:scaleX(0.9638);">4.8-1-17</span>
<svg style="left:506px;top:340px" width="11" height="11" viewBox="0 0 11 11"><rect x="1.2" y="0.7" width="8.6" height="8.9" fill="#fff" stroke="#6A45BE" stroke-width="1.2"/><rect x="1.2" y="0.1" width="8.6" height="1.2" fill="#4527A0"/><path d="M5.5 2.6 V7.4 M3.1 4.6 H7.9" stroke="#4527A0" stroke-width="1.1"/></svg>
<div style="left:575px;top:325px;width:88px;height:13px;background:#FFA000;"></div>
<div style="left:687px;top:325px;width:111px;height:13px;background:#FFA000;"></div>
<span class="t" style="left:530.70px;top:324.19px;font-size:11px;line-height:14px;color:#2e2e2e;transform:scaleX(1.0170);">Монтаж </span>
<span class="t" style="left:575.80px;top:324.19px;font-size:11px;line-height:14px;color:#2e2e2e;">трансформатора</span>
<span class="t" style="left:665.80px;top:324.19px;font-size:11px;line-height:14px;color:#2e2e2e;transform:scaleX(1.0170);">или</span>
<span class="t" style="left:687.80px;top:324.19px;font-size:11px;line-height:14px;color:#2e2e2e;transform:scaleX(1.0040);">автотрансформатора</span>
<span class="t" style="left:801.00px;top:324.19px;font-size:11px;line-height:14px;color:#2e2e2e;transform:scaleX(1.0250);">силового трехфазного напряжением</span>
<span class="t" style="left:530.70px;top:337.19px;font-size:11px;line-height:14px;color:#2e2e2e;transform:scaleX(1.0100);">220 кВ, мощностью 25000-160000 кВ•А</span>
<span class="t" style="left:1031.30px;top:324.19px;font-size:11px;line-height:14px;color:#2e2e2e;transform:scaleX(1.0131);">1 шт.</span>
<span class="t" style="left:1247.53px;top:324.19px;font-size:11px;line-height:14px;color:#2e2e2e;transform:scaleX(0.9700);">18 882,75</span>
<div style="left:381px;top:392px;width:994px;height:1px;background:#D4C7EC;"></div>
<div style="left:520px;top:356px;width:1px;height:36px;background:#D4C7EC;"></div>
<div style="left:1020px;top:356px;width:1px;height:36px;background:#D4C7EC;"></div>
<div style="left:1160px;top:356px;width:1px;height:36px;background:#D4C7EC;"></div>
<div style="left:1300px;top:356px;width:1px;height:36px;background:#D4C7EC;"></div>
<span class="t" style="left:391.10px;top:360.19px;font-size:11px;line-height:14px;color:#2e2e2e;transform:scaleX(0.9638);">4.8-1-18</span>
<svg style="left:506px;top:376px" width="11" height="11" viewBox="0 0 11 11"><rect x="1.2" y="0.7" width="8.6" height="8.9" fill="#fff" stroke="#6A45BE" stroke-width="1.2"/><rect x="1.2" y="0.1" width="8.6" height="1.2" fill="#4527A0"/><path d="M5.5 2.6 V7.4 M3.1 4.6 H7.9" stroke="#4527A0" stroke-width="1.1"/></svg>
<div style="left:575px;top:361px;width:88px;height:13px;background:#FFA000;"></div>
<div style="left:687px;top:361px;width:111px;height:13px;background:#FFA000;"></div>
<span class="t" style="left:530.70px;top:360.19px;font-size:11px;line-height:14px;color:#2e2e2e;transform:scaleX(1.0170);">Монтаж </span>
<span class="t" style="left:575.80px;top:360.19px;font-size:11px;line-height:14px;color:#2e2e2e;">трансформатора</span>
<span class="t" style="left:665.80px;top:360.19px;font-size:11px;line-height:14px;color:#2e2e2e;transform:scaleX(1.0170);">или</span>
<span class="t" style="left:687.80px;top:360.19px;font-size:11px;line-height:14px;color:#2e2e2e;transform:scaleX(1.0040);">автотрансформатора</span>
<span class="t" style="left:801.00px;top:360.19px;font-size:11px;line-height:14px;color:#2e2e2e;transform:scaleX(1.0250);">силового трехфазного напряжением</span>
<span class="t" style="left:530.70px;top:373.19px;font-size:11px;line-height:14px;color:#2e2e2e;transform:scaleX(1.0100);">220 кВ, мощностью 200000, 250000 кВ•А</span>
<span class="t" style="left:1031.30px;top:360.19px;font-size:11px;line-height:14px;color:#2e2e2e;transform:scaleX(1.0131);">1 шт.</span>
<span class="t" style="left:1247.53px;top:360.19px;font-size:11px;line-height:14px;color:#2e2e2e;transform:scaleX(0.9700);">22 459,73</span>
<div style="left:381px;top:393px;width:994px;height:35px;background:#F8F6FD;"></div>
<div style="left:381px;top:428px;width:994px;height:1px;background:#D4C7EC;"></div>
<div style="left:520px;top:392px;width:1px;height:36px;background:#D4C7EC;"></div>
<div style="left:1020px;top:392px;width:1px;height:36px;background:#D4C7EC;"></div>
<div style="left:1160px;top:392px;width:1px;height:36px;background:#D4C7EC;"></div>
<div style="left:1300px;top:392px;width:1px;height:36px;background:#D4C7EC;"></div>
<span class="t" style="left:391.10px;top:396.19px;font-size:11px;line-height:14px;color:#2e2e2e;transform:scaleX(0.9638);">4.8-1-19</span>
<svg style="left:506px;top:412px" width="11" height="11" viewBox="0 0 11 11"><rect x="1.2" y="0.7" width="8.6" height="8.9" fill="#fff" stroke="#6A45BE" stroke-width="1.2"/><rect x="1.2" y="0.1" width="8.6" height="1.2" fill="#4527A0"/><path d="M5.5 2.6 V7.4 M3.1 4.6 H7.9" stroke="#4527A0" stroke-width="1.1"/></svg>
<div style="left:575px;top:397px;width:88px;height:13px;background:#FFA000;"></div>
<div style="left:687px;top:397px;width:111px;height:13px;background:#FFA000;"></div>
<span class="t" style="left:530.70px;top:396.19px;font-size:11px;line-height:14px;color:#2e2e2e;transform:scaleX(1.0170);">Монтаж </span>
<span class="t" style="left:575.80px;top:396.19px;font-size:11px;line-height:14px;color:#2e2e2e;">трансформатора</span>
<span class="t" style="left:665.80px;top:396.19px;font-size:11px;line-height:14px;color:#2e2e2e;transform:scaleX(1.0170);">или</span>
<span class="t" style="left:687.80px;top:396.19px;font-size:11px;line-height:14px;color:#2e2e2e;transform:scaleX(1.0040);">автотрансформатора</span>
<span class="t" style="left:801.00px;top:396.19px;font-size:11px;line-height:14px;color:#2e2e2e;transform:scaleX(1.0250);">силового трехфазного напряжением</span>
<span class="t" style="left:530.70px;top:409.19px;font-size:11px;line-height:14px;color:#2e2e2e;transform:scaleX(1.0100);">220 кВ, мощностью 400000, 630000 кВ•А</span>
<span class="t" style="left:1031.30px;top:396.19px;font-size:11px;line-height:14px;color:#2e2e2e;transform:scaleX(1.0131);">1 шт.</span>
<span class="t" style="left:1247.53px;top:396.19px;font-size:11px;line-height:14px;color:#2e2e2e;transform:scaleX(0.9700);">27 986,23</span>
<div style="left:381px;top:464px;width:994px;height:1px;background:#D4C7EC;"></div>
<div style="left:520px;top:428px;width:1px;height:36px;background:#D4C7EC;"></div>
<div style="left:1020px;top:428px;width:1px;height:36px;background:#D4C7EC;"></div>
<div style="left:1160px;top:428px;width:1px;height:36px;background:#D4C7EC;"></div>
<div style="left:1300px;top:428px;width:1px;height:36px;background:#D4C7EC;"></div>
<span class="t" style="left:391.10px;top:432.19px;font-size:11px;line-height:14px;color:#2e2e2e;transform:scaleX(0.9638);">4.8-1-20</span>
<svg style="left:506px;top:448px" width="11" height="11" viewBox="0 0 11 11"><rect x="1.2" y="0.7" width="8.6" height="8.9" fill="#fff" stroke="#6A45BE" stroke-width="1.2"/><rect x="1.2" y="0.1" width="8.6" height="1.2" fill="#4527A0"/><path d="M5.5 2.6 V7.4 M3.1 4.6 H7.9" stroke="#4527A0" stroke-width="1.1"/></svg>
<div style="left:575px;top:433px;width:88px;height:13px;background:#FFA000;"></div>
<div style="left:687px;top:433px;width:111px;height:13px;background:#FFA000;"></div>
<span class="t" style="left:530.70px;top:432.19px;font-size:11px;line-height:14px;color:#2e2e2e;transform:scaleX(1.0170);">Монтаж </span>
<span class="t" style="left:575.80px;top:432.19px;font-size:11px;line-height:14px;color:#2e2e2e;">трансформатора</span>
<span class="t" style="left:665.80px;top:432.19px;font-size:11px;line-height:14px;color:#2e2e2e;transform:scaleX(1.0170);">или</span>
<span class="t" style="left:687.80px;top:432.19px;font-size:11px;line-height:14px;color:#2e2e2e;transform:scaleX(1.0040);">автотрансформатора</span>
<span class="t" style="left:801.00px;top:432.19px;font-size:11px;line-height:14px;color:#2e2e2e;transform:scaleX(1.0250);">силового трехфазного напряжением</span>
<span class="t" style="left:530.70px;top:445.19px;font-size:11px;line-height:14px;color:#2e2e2e;transform:scaleX(1.0100);">330 кВ, мощностью 63000 кВ•А</span>
<span class="t" style="left:1031.30px;top:432.19px;font-size:11px;line-height:14px;color:#2e2e2e;transform:scaleX(1.0131);">1 шт.</span>
<span class="t" style="left:1247.53px;top:432.19px;font-size:11px;line-height:14px;color:#2e2e2e;transform:scaleX(0.9700);">20 932,03</span>
<div style="left:381px;top:465px;width:994px;height:35px;background:#F8F6FD;"></div>
<div style="left:381px;top:500px;width:994px;height:1px;background:#D4C7EC;"></div>
<div style="left:520px;top:464px;width:1px;height:36px;background:#D4C7EC;"></div>
<div style="left:1020px;top:464px;width:1px;height:36px;background:#D4C7EC;"></div>
<div style="left:1160px;top:464px;width:1px;height:36px;background:#D4C7EC;"></div>
<div style="left:1300px;top:464px;width:1px;height:36px;background:#D4C7EC;"></div>
<span class="t" style="left:391.10px;top:468.19px;font-size:11px;line-height:14px;color:#2e2e2e;transform:scaleX(0.9638);">4.8-1-21</span>
<svg style="left:506px;top:484px" width="11" height="11" viewBox="0 0 11 11"><rect x="1.2" y="0.7" width="8.6" height="8.9" fill="#fff" stroke="#6A45BE" stroke-width="1.2"/><rect x="1.2" y="0.1" width="8.6" height="1.2" fill="#4527A0"/><path d="M5.5 2.6 V7.4 M3.1 4.6 H7.9" stroke="#4527A0" stroke-width="1.1"/></svg>
<div style="left:575px;top:469px;width:88px;height:13px;background:#FFA000;"></div>
<div style="left:687px;top:469px;width:111px;height:13px;background:#FFA000;"></div>
<span class="t" style="left:530.70px;top:468.19px;font-size:11px;line-height:14px;color:#2e2e2e;transform:scaleX(1.0170);">Монтаж </span>
<span class="t" style="left:575.80px;top:468.19px;font-size:11px;line-height:14px;color:#2e2e2e;">трансформатора</span>
<span class="t" style="left:665.80px;top:468.19px;font-size:11px;line-height:14px;color:#2e2e2e;transform:scaleX(1.0170);">или</span>
<span class="t" style="left:687.80px;top:468.19px;font-size:11px;line-height:14px;color:#2e2e2e;transform:scaleX(1.0040);">автотрансформатора</span>
<span class="t" style="left:801.00px;top:468.19px;font-size:11px;line-height:14px;color:#2e2e2e;transform:scaleX(1.0250);">силового трехфазного напряжением</span>
<span class="t" style="left:530.70px;top:481.19px;font-size:11px;line-height:14px;color:#2e2e2e;transform:scaleX(1.0100);">330 кВ, мощностью 125000-400000 кВ•А</span>
<span class="t" style="left:1031.30px;top:468.19px;font-size:11px;line-height:14px;color:#2e2e2e;transform:scaleX(1.0131);">1 шт.</span>
<span class="t" style="left:1247.53px;top:468.19px;font-size:11px;line-height:14px;color:#2e2e2e;transform:scaleX(0.9700);">25 298,69</span>
<div style="left:381px;top:536px;width:994px;height:1px;background:#D4C7EC;"></div>
<div style="left:520px;top:500px;width:1px;height:36px;background:#D4C7EC;"></div>
<div style="left:1020px;top:500px;width:1px;height:36px;background:#D4C7EC;"></div>
<div style="left:1160px;top:500px;width:1px;height:36px;background:#D4C7EC;"></div>
<div style="left:1300px;top:500px;width:1px;height:36px;background:#D4C7EC;"></div>
<span class="t" style="left:391.10px;top:504.19px;font-size:11px;line-height:14px;color:#2e2e2e;transform:scaleX(0.9638);">4.8-1-22</span>
<svg style="left:506px;top:520px" width="11" height="11" viewBox="0 0 11 11"><rect x="1.2" y="0.7" width="8.6" height="8.9" fill="#fff" stroke="#6A45BE" stroke-width="1.2"/><rect x="1.2" y="0.1" width="8.6" height="1.2" fill="#4527A0"/><path d="M5.5 2.6 V7.4 M3.1 4.6 H7.9" stroke="#4527A0" stroke-width="1.1"/></svg>
<div style="left:575px;top:505px;width:88px;height:13px;background:#FFA000;"></div>
<div style="left:687px;top:505px;width:111px;height:13px;background:#FFA000;"></div>
<span class="t" style="left:530.70px;top:504.19px;font-size:11px;line-height:14px;color:#2e2e2e;transform:scaleX(1.0170);">Монтаж </span>
<span class="t" style="left:575.80px;top:504.19px;font-size:11px;line-height:14px;color:#2e2e2e;">трансформатора</span>
<span class="t" style="left:665.80px;top:504.19px;font-size:11px;line-height:14px;color:#2e2e2e;transform:scaleX(1.0170);">или</span>
<span class="t" style="left:687.80px;top:504.19px;font-size:11px;line-height:14px;color:#2e2e2e;transform:scaleX(1.0040);">автотрансформатора</span>
<span class="t" style="left:801.00px;top:504.19px;font-size:11px;line-height:14px;color:#2e2e2e;transform:scaleX(1.0250);">силового трехфазного напряжением</span>
<span class="t" style="left:530.70px;top:517.19px;font-size:11px;line-height:14px;color:#2e2e2e;transform:scaleX(1.0100);">330 кВ мощностью 1250000 кВ•А</span>
<span class="t" style="left:1031.30px;top:504.19px;font-size:11px;line-height:14px;color:#2e2e2e;transform:scaleX(1.0131);">1 шт.</span>
<span class="t" style="left:1247.53px;top:504.19px;font-size:11px;line-height:14px;color:#2e2e2e;transform:scaleX(0.9700);">33 376,39</span>
<div style="left:381px;top:537px;width:994px;height:35px;background:#F8F6FD;"></div>
<div style="left:381px;top:572px;width:994px;height:1px;background:#D4C7EC;"></div>
<div style="left:520px;top:536px;width:1px;height:36px;background:#D4C7EC;"></div>
<div style="left:1020px;top:536px;width:1px;height:36px;background:#D4C7EC;"></div>
<div style="left:1160px;top:536px;width:1px;height:36px;background:#D4C7EC;"></div>
<div style="left:1300px;top:536px;width:1px;height:36px;background:#D4C7EC;"></div>
<span class="t" style="left:391.10px;top:540.19px;font-size:11px;line-height:14px;color:#2e2e2e;transform:scaleX(0.9638);">4.8-1-23</span>
<svg style="left:506px;top:556px" width="11" height="11" viewBox="0 0 11 11"><rect x="1.2" y="0.7" width="8.6" height="8.9" fill="#fff" stroke="#6A45BE" stroke-width="1.2"/><rect x="1.2" y="0.1" width="8.6" height="1.2" fill="#4527A0"/><path d="M5.5 2.6 V7.4 M3.1 4.6 H7.9" stroke="#4527A0" stroke-width="1.1"/></svg>
<div style="left:575px;top:541px;width:88px;height:13px;background:#FFA000;"></div>
<div style="left:687px;top:541px;width:111px;height:13px;background:#FFA000;"></div>
<span class="t" style="left:530.70px;top:540.19px;font-size:11px;line-height:14px;color:#2e2e2e;transform:scaleX(1.0170);">Монтаж </span>
<span class="t" style="left:575.80px;top:540.19px;font-size:11px;line-height:14px;color:#2e2e2e;">трансформатора</span>
<span class="t" style="left:665.80px;top:540.19px;font-size:11px;line-height:14px;color:#2e2e2e;transform:scaleX(1.0170);">или</span>
<span class="t" style="left:687.80px;top:540.19px;font-size:11px;line-height:14px;color:#2e2e2e;transform:scaleX(1.0040);">автотрансформатора</span>
<span class="t" style="left:801.00px;top:540.19px;font-size:11px;line-height:14px;color:#2e2e2e;transform:scaleX(1.0250);">силового однофазного напряжением</span>
<span class="t" style="left:530.70px;top:553.19px;font-size:11px;line-height:14px;color:#2e2e2e;transform:scaleX(1.0100);">330 кВ мощностью 133000 кВ•А</span>
<span class="t" style="left:1031.30px;top:540.19px;font-size:11px;line-height:14px;color:#2e2e2e;transform:scaleX(1.0131);">1 шт.</span>
<span class="t" style="left:1247.53px;top:540.19px;font-size:11px;line-height:14px;color:#2e2e2e;transform:scaleX(0.9700);">18 265,62</span>
<div style="left:381px;top:608px;width:994px;height:1px;background:#D4C7EC;"></div>
<div style="left:520px;top:572px;width:1px;height:36px;background:#D4C7EC;"></div>
<div style="left:1020px;top:572px;width:1px;height:36px;background:#D4C7EC;"></div>
<div style="left:1160px;top:572px;width:1px;height:36px;background:#D4C7EC;"></div>
<div style="left:1300px;top:572px;width:1px;height:36px;background:#D4C7EC;"></div>
<span class="t" style="left:391.10px;top:576.19px;font-size:11px;line-height:14px;color:#2e2e2e;transform:scaleX(0.9638);">4.8-1-24</span>
<svg style="left:506px;top:592px" width="11" height="11" viewBox="0 0 11 11"><rect x="1.2" y="0.7" width="8.6" height="8.9" fill="#fff" stroke="#6A45BE" stroke-width="1.2"/><rect x="1.2" y="0.1" width="8.6" height="1.2" fill="#4527A0"/><path d="M5.5 2.6 V7.4 M3.1 4.6 H7.9" stroke="#4527A0" stroke-width="1.1"/></svg>
<div style="left:575px;top:577px;width:88px;height:13px;background:#FFA000;"></div>
<div style="left:687px;top:577px;width:111px;height:13px;background:#FFA000;"></div>
<span class="t" style="left:530.70px;top:576.19px;font-size:11px;line-height:14px;color:#2e2e2e;transform:scaleX(1.0170);">Монтаж </span>
<span class="t" style="left:575.80px;top:576.19px;font-size:11px;line-height:14px;color:#2e2e2e;">трансформатора</span>
<span class="t" style="left:665.80px;top:576.19px;font-size:11px;line-height:14px;color:#2e2e2e;transform:scaleX(1.0170);">или</span>
<span class="t" style="left:687.80px;top:576.19px;font-size:11px;line-height:14px;color:#2e2e2e;transform:scaleX(1.0040);">автотрансформатора</span>
<span class="t" style="left:801.00px;top:576.19px;font-size:11px;line-height:14px;color:#2e2e2e;transform:scaleX(1.0250);">силового трехфазного напряжением</span>
<span class="t" style="left:530.70px;top:589.19px;font-size:11px;line-height:14px;color:#2e2e2e;transform:scaleX(1.0100);">500 кВ мощностью, 250000 кВ•А</span>
<span class="t" style="left:1031.30px;top:576.19px;font-size:11px;line-height:14px;color:#2e2e2e;transform:scaleX(1.0131);">1 шт.</span>
<span class="t" style="left:1247.53px;top:576.19px;font-size:11px;line-height:14px;color:#2e2e2e;transform:scaleX(0.9700);">22 554,13</span>
<div style="left:381px;top:609px;width:994px;height:35px;background:#F8F6FD;"></div>
<div style="left:381px;top:644px;width:994px;height:1px;background:#D4C7EC;"></div>
<div style="left:520px;top:608px;width:1px;height:36px;background:#D4C7EC;"></div>
<div style="left:1020px;top:608px;width:1px;height:36px;background:#D4C7EC;"></div>
<div style="left:1160px;top:608px;width:1px;height:36px;background:#D4C7EC;"></div>
<div style="left:1300px;top:608px;width:1px;height:36px;background:#D4C7EC;"></div>
<span class="t" style="left:391.10px;top:612.19px;font-size:11px;line-height:14px;color:#2e2e2e;transform:scaleX(0.9638);">4.8-1-25</span>
<svg style="left:506px;top:628px" width="11" height="11" viewBox="0 0 11 11"><rect x="1.2" y="0.7" width="8.6" height="8.9" fill="#fff" stroke="#6A45BE" stroke-width="1.2"/><rect x="1.2" y="0.1" width="8.6" height="1.2" fill="#4527A0"/><path d="M5.5 2.6 V7.4 M3.1 4.6 H7.9" stroke="#4527A0" stroke-width="1.1"/></svg>
<div style="left:575px;top:613px;width:88px;height:13px;background:#FFA000;"></div>
<div style="left:687px;top:613px;width:111px;height:13px;background:#FFA000;"></div>
<span class="t" style="left:530.70px;top:612.19px;font-size:11px;line-height:14px;color:#2e2e2e;transform:scaleX(1.0170);">Монтаж </span>
<span class="t" style="left:575.80px;top:612.19px;font-size:11px;line-height:14px;color:#2e2e2e;">трансформатора</span>
<span class="t" style="left:665.80px;top:612.19px;font-size:11px;line-height:14px;color:#2e2e2e;transform:scaleX(1.0170);">или</span>
<span class="t" style="left:687.80px;top:612.19px;font-size:11px;line-height:14px;color:#2e2e2e;transform:scaleX(1.0040);">автотрансформатора</span>
<span class="t" style="left:801.00px;top:612.19px;font-size:11px;line-height:14px;color:#2e2e2e;transform:scaleX(1.0250);">силового трехфазного напряжением</span>
<span class="t" style="left:530.70px;top:625.19px;font-size:11px;line-height:14px;color:#2e2e2e;transform:scaleX(1.0100);">500 кВ, мощностью 400000 кВ•А</span>
<span class="t" style="left:1031.30px;top:612.19px;font-size:11px;line-height:14px;color:#2e2e2e;transform:scaleX(1.0131);">1 шт.</span>
<span class="t" style="left:1247.53px;top:612.19px;font-size:11px;line-height:14px;color:#2e2e2e;transform:scaleX(0.9700);">26 440,02</span>
<div style="left:381px;top:680px;width:994px;height:1px;background:#D4C7EC;"></div>
<div style="left:520px;top:644px;width:1px;height:36px;background:#D4C7EC;"></div>
<div style="left:1020px;top:644px;width:1px;height:36px;background:#D4C7EC;"></div>
<div style="left:1160px;top:644px;width:1px;height:36px;background:#D4C7EC;"></div>
<div style="left:1300px;top:644px;width:1px;height:36px;background:#D4C7EC;"></div>
<span class="t" style="left:391.10px;top:648.19px;font-size:11px;line-height:14px;color:#2e2e2e;transform:scaleX(0.9638);">4.8-1-26</span>
<svg style="left:506px;top:664px" width="11" height="11" viewBox="0 0 11 11"><rect x="1.2" y="0.7" width="8.6" height="8.9" fill="#fff" stroke="#6A45BE" stroke-width="1.2"/><rect x="1.2" y="0.1" width="8.6" height="1.2" fill="#4527A0"/><path d="M5.5 2.6 V7.4 M3.1 4.6 H7.9" stroke="#4527A0" stroke-width="1.1"/></svg>
<div style="left:575px;top:649px;width:88px;height:13px;background:#FFA000;"></div>
<div style="left:687px;top:649px;width:111px;height:13px;background:#FFA000;"></div>
<span class="t" style="left:530.70px;top:648.19px;font-size:11px;line-height:14px;color:#2e2e2e;transform:scaleX(1.0170);">Монтаж </span>
<span class="t" style="left:575.80px;top:648.19px;font-size:11px;line-height:14px;color:#2e2e2e;">трансформатора</span>
<span class="t" style="left:665.80px;top:648.19px;font-size:11px;line-height:14px;color:#2e2e2e;transform:scaleX(1.0170);">или</span>
<span class="t" style="left:687.80px;top:648.19px;font-size:11px;line-height:14px;color:#2e2e2e;transform:scaleX(1.0040);">автотрансформатора</span>
<span class="t" style="left:801.00px;top:648.19px;font-size:11px;line-height:14px;color:#2e2e2e;transform:scaleX(1.0250);">силового трехфазного напряжением</span>
<span class="t" style="left:530.70px;top:661.19px;font-size:11px;line-height:14px;color:#2e2e2e;transform:scaleX(1.0100);">500 кВ, мощностью 630000, 1000000 кВ•А</span>
<span class="t" style="left:1031.30px;top:648.19px;font-size:11px;line-height:14px;color:#2e2e2e;transform:scaleX(1.0131);">1 шт.</span>
<span class="t" style="left:1247.53px;top:648.19px;font-size:11px;line-height:14px;color:#2e2e2e;transform:scaleX(0.9700);">30 904,09</span>
<div style="left:381px;top:681px;width:994px;height:35px;background:#F8F6FD;"></div>
<div style="left:381px;top:716px;width:994px;height:1px;background:#D4C7EC;"></div>
<div style="left:520px;top:680px;width:1px;height:36px;background:#D4C7EC;"></div>
<div style="left:1020px;top:680px;width:1px;height:36px;background:#D4C7EC;"></div>
<div style="left:1160px;top:680px;width:1px;height:36px;background:#D4C7EC;"></div>
<div style="left:1300px;top:680px;width:1px;height:36px;background:#D4C7EC;"></div>
<span class="t" style="left:391.10px;top:684.19px;font-size:11px;line-height:14px;color:#2e2e2e;transform:scaleX(0.9638);">4.8-1-27</span>
<svg style="left:506px;top:700px" width="11" height="11" viewBox="0 0 11 11"><rect x="1.2" y="0.7" width="8.6" height="8.9" fill="#fff" stroke="#6A45BE" stroke-width="1.2"/><rect x="1.2" y="0.1" width="8.6" height="1.2" fill="#4527A0"/><path d="M5.5 2.6 V7.4 M3.1 4.6 H7.9" stroke="#4527A0" stroke-width="1.1"/></svg>
<div style="left:575px;top:685px;width:88px;height:13px;background:#FFA000;"></div>
<div style="left:687px;top:685px;width:111px;height:13px;background:#FFA000;"></div>
<span class="t" style="left:530.70px;top:684.19px;font-size:11px;line-height:14px;color:#2e2e2e;transform:scaleX(1.0170);">Монтаж </span>
<span class="t" style="left:575.80px;top:684.19px;font-size:11px;line-height:14px;color:#2e2e2e;">трансформатора</span>
<span class="t" style="left:665.80px;top:684.19px;font-size:11px;line-height:14px;color:#2e2e2e;transform:scaleX(1.0170);">или</span>
<span class="t" style="left:687.80px;top:684.19px;font-size:11px;line-height:14px;color:#2e2e2e;transform:scaleX(1.0040);">автотрансформатора</span>
<span class="t" style="left:801.00px;top:684.19px;font-size:11px;line-height:14px;color:#2e2e2e;transform:scaleX(1.0250);">силового однофазного напряжением</span>
<span class="t" style="left:530.70px;top:697.19px;font-size:11px;line-height:14px;color:#2e2e2e;transform:scaleX(1.0100);">500 кВ, мощностью 135000, 167000 кВ•А</span>
<span class="t" style="left:1031.30px;top:684.19px;font-size:11px;line-height:14px;color:#2e2e2e;transform:scaleX(1.0131);">1 шт.</span>
<span class="t" style="left:1247.53px;top:684.19px;font-size:11px;line-height:14px;color:#2e2e2e;transform:scaleX(0.9700);">17 508,56</span>
<div style="left:381px;top:752px;width:994px;height:1px;background:#D4C7EC;"></div>
<div style="left:520px;top:716px;width:1px;height:36px;background:#D4C7EC;"></div>
<div style="left:1020px;top:716px;width:1px;height:36px;background:#D4C7EC;"></div>
<div style="left:1160px;top:716px;width:1px;height:36px;background:#D4C7EC;"></div>
<div style="left:1300px;top:716px;width:1px;height:36px;background:#D4C7EC;"></div>
<span class="t" style="left:391.10px;top:720.19px;font-size:11px;line-height:14px;color:#2e2e2e;transform:scaleX(0.9638);">4.8-1-28</span>
<svg style="left:506px;top:736px" width="11" height="11" viewBox="0 0 11 11"><rect x="1.2" y="0.7" width="8.6" height="8.9" fill="#fff" stroke="#6A45BE" stroke-width="1.2"/><rect x="1.2" y="0.1" width="8.6" height="1.2" fill="#4527A0"/><path d="M5.5 2.6 V7.4 M3.1 4.6 H7.9" stroke="#4527A0" stroke-width="1.1"/></svg>
<div style="left:575px;top:721px;width:88px;height:13px;background:#FFA000;"></div>
<div style="left:687px;top:721px;width:111px;height:13px;background:#FFA000;"></div>
<span class="t" style="left:530.70px;top:720.19px;font-size:11px;line-height:14px;color:#2e2e2e;transform:scaleX(1.0170);">Монтаж </span>
<span class="t" style="left:575.80px;top:720.19px;font-size:11px;line-height:14px;color:#2e2e2e;">трансформатора</span>
<span class="t" style="left:665.80px;top:720.19px;font-size:11px;line-height:14px;color:#2e2e2e;transform:scaleX(1.0170);">или</span>
<span class="t" style="left:687.80px;top:720.19px;font-size:11px;line-height:14px;color:#2e2e2e;transform:scaleX(1.0040);">автотрансформатора</span>
<span class="t" style="left:801.00px;top:720.19px;font-size:11px;line-height:14px;color:#2e2e2e;transform:scaleX(1.0250);">силового однофазного напряжением</span>
<span class="t" style="left:530.70px;top:733.19px;font-size:11px;line-height:14px;color:#2e2e2e;transform:scaleX(1.0100);">500 кВ, мощностью 267000 кВ•А</span>
<span class="t" style="left:1031.30px;top:720.19px;font-size:11px;line-height:14px;color:#2e2e2e;transform:scaleX(1.0131);">1 шт.</span>
<span class="t" style="left:1247.53px;top:720.19px;font-size:11px;line-height:14px;color:#2e2e2e;transform:scaleX(0.9700);">19 312,84</span>
<div style="left:381px;top:753px;width:994px;height:35px;background:#F8F6FD;"></div>
<div style="left:381px;top:788px;width:994px;height:1px;background:#D4C7EC;"></div>
<div style="left:520px;top:752px;width:1px;height:36px;background:#D4C7EC;"></div>
<div style="left:1020px;top:752px;width:1px;height:36px;background:#D4C7EC;"></div>
<div style="left:1160px;top:752px;width:1px;height:36px;background:#D4C7EC;"></div>
<div style="left:1300px;top:752px;width:1px;height:36px;background:#D4C7EC;"></div>
<span class="t" style="left:391.10px;top:756.19px;font-size:11px;line-height:14px;color:#2e2e2e;transform:scaleX(0.9638);">4.8-1-29</span>
<svg style="left:506px;top:772px" width="11" height="11" viewBox="0 0 11 11"><rect x="1.2" y="0.7" width="8.6" height="8.9" fill="#fff" stroke="#6A45BE" stroke-width="1.2"/><rect x="1.2" y="0.1" width="8.6" height="1.2" fill="#4527A0"/><path d="M5.5 2.6 V7.4 M3.1 4.6 H7.9" stroke="#4527A0" stroke-width="1.1"/></svg>
<div style="left:575px;top:757px;width:88px;height:13px;background:#FFA000;"></div>
<div style="left:687px;top:757px;width:111px;height:13px;background:#FFA000;"></div>
<span class="t" style="left:530.70px;top:756.19px;font-size:11px;line-height:14px;color:#2e2e2e;transform:scaleX(1.0170);">Монтаж </span>
<span class="t" style="left:575.80px;top:756.19px;font-size:11px;line-height:14px;color:#2e2e2e;">трансформатора</span>
<span class="t" style="left:665.80px;top:756.19px;font-size:11px;line-height:14px;color:#2e2e2e;transform:scaleX(1.0170);">или</span>
<span class="t" style="left:687.80px;top:756.19px;font-size:11px;line-height:14px;color:#2e2e2e;transform:scaleX(1.0040);">автотрансформатора</span>
<span class="t" style="left:801.00px;top:756.19px;font-size:11px;line-height:14px;color:#2e2e2e;transform:scaleX(1.0250);">силового однофазного напряжением</span>
<span class="t" style="left:530.70px;top:769.19px;font-size:11px;line-height:14px;color:#2e2e2e;transform:scaleX(1.0100);">500 кВ, мощностью 533000 кВ•А</span>
<span class="t" style="left:1031.30px;top:756.19px;font-size:11px;line-height:14px;color:#2e2e2e;transform:scaleX(1.0131);">1 шт.</span>
<span class="t" style="left:1247.53px;top:756.19px;font-size:11px;line-height:14px;color:#2e2e2e;transform:scaleX(0.9700);">20 362,30</span>
<div style="left:381px;top:775px;width:1021px;height:23px;background:#ffffff;"></div>
<div style="left:381px;top:775px;width:1000px;height:1px;background:#D4C7EC;"></div>
<div style="left:1020px;top:781px;width:362px;height:1px;background:#D4C7EC;"></div>
<div style="left:1381px;top:211px;width:1px;height:571px;background:#D4C7EC;"></div>
<div style="left:1021px;top:776px;width:150px;height:5px;background:#A898D5;border-radius:3px;"></div>
<div style="left:1375px;top:211px;width:6px;height:76px;background:#A898D5;border-radius:3px;"></div>
<div style="left:1020px;top:793px;width:375px;height:1px;background:#D4C7EC;"></div>
<div style="left:1020px;top:793px;width:1px;height:6px;background:#D4C7EC;"></div>
<div style="left:1394px;top:781px;width:3px;height:3px;background:#9a9a9a;border-radius:50%;"></div>
<div style="left:1389px;top:786px;width:3px;height:3px;background:#9a9a9a;border-radius:50%;"></div>
<div style="left:1394px;top:786px;width:3px;height:3px;background:#9a9a9a;border-radius:50%;"></div>
<div style="left:1384px;top:791px;width:3px;height:3px;background:#9a9a9a;border-radius:50%;"></div>
<div style="left:1389px;top:791px;width:3px;height:3px;background:#9a9a9a;border-radius:50%;"></div>
<div style="left:1394px;top:791px;width:3px;height:3px;background:#9a9a9a;border-radius:50%;"></div>
</body></html>
